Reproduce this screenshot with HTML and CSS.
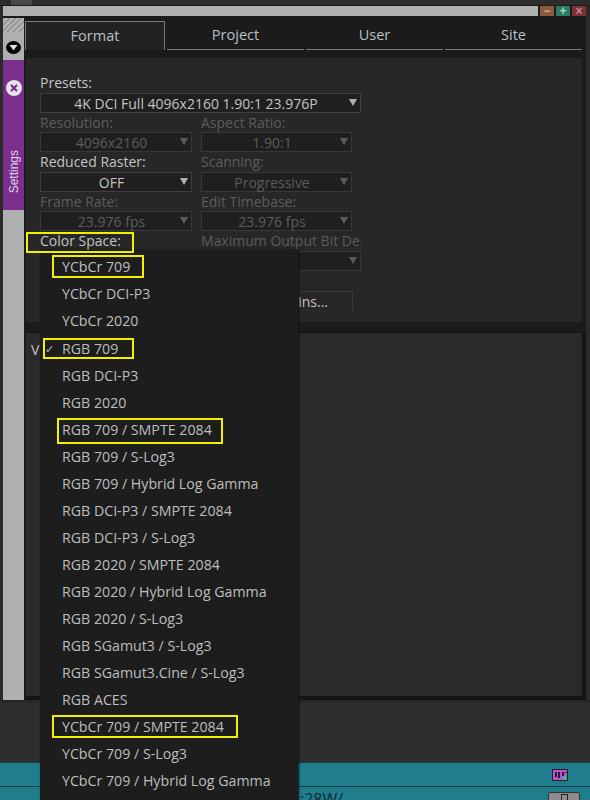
FILE: index.html
```html
<!DOCTYPE html>
<html lang="en">
<head>
    <meta charset="UTF-8">
    <title>Project Settings</title>
    <link rel="stylesheet" href="styles.css">
</head>
<body>
<div class="screen">
    <div class="top-strip"><span class="strip-tab"></span></div>
    <div class="titlebar">
        <div class="title-fill"></div>
        <button class="win-btn win-min">&minus;</button>
        <button class="win-btn win-max">+</button>
        <button class="win-btn win-close">&times;</button>
    </div>

    <div class="body">
        <aside class="sidebar">
            <div class="hatch"></div>
            <div class="side-grey">
                <svg width="15" height="13" viewBox="0 0 15 13"><ellipse cx="7.5" cy="6.5" rx="7.5" ry="6.5" fill="#000"/><path d="M3.5 4h8L7.5 9.5z" fill="#ddd"/></svg>
            </div>
            <div class="side-tab">
                <svg width="16" height="16" viewBox="0 0 16 16"><circle cx="8" cy="8" r="8" fill="#e8e0ea"/><path d="M5 5l6 6M11 5l-6 6" stroke="#7b2f8c" stroke-width="2.2"/></svg>
                <span class="side-label">Settings</span>
            </div>
            <div class="side-rest"></div>
        </aside>

        <main class="main">
            <nav class="tabs">
                <div class="tab active">Format</div>
                <div class="tab">Project</div>
                <div class="tab">User</div>
                <div class="tab">Site</div>
            </nav>

            <section class="panel">
                <div class="field wide">
                    <label>Presets:</label>
                    <div class="select wide-select">4K DCI Full 4096x2160 1.90:1 23.976P</div>
                </div>
                <div class="field off">
                    <label>Resolution:</label>
                    <div class="select">4096x2160</div>
                </div>
                <div class="field off">
                    <label>Aspect Ratio:</label>
                    <div class="select">1.90:1</div>
                </div>
                <div class="field">
                    <label>Reduced Raster:</label>
                    <div class="select">OFF</div>
                </div>
                <div class="field off">
                    <label>Scanning:</label>
                    <div class="select">Progressive</div>
                </div>
                <div class="field off">
                    <label>Frame Rate:</label>
                    <div class="select">23.976 fps</div>
                </div>
                <div class="field off">
                    <label>Edit Timebase:</label>
                    <div class="select">23.976 fps</div>
                </div>
                <div class="field">
                    <label>Color Space:</label>
                    <div class="select"></div>
                </div>
                <div class="field off">
                    <label class="clip">Maximum Output Bit Depth:</label>
                    <div class="select full">10</div>
                </div>
                <div class="plugin-btn">Project Plugins...</div>
            </section>

            <section class="panel-lower">V</section>
        </main>
    </div>

    <div class="footer"></div>
    <div class="track track-one">
        <svg class="track-icon" width="16" height="12" viewBox="0 0 16 12"><rect x=".5" y=".5" width="15" height="11" fill="#c050d8" stroke="#222"/><path d="M4 3v5M7 3v6M11 3v4M14 3v1" stroke="#222" stroke-width="2"/><rect x="11" y="7.5" width="3.5" height="3.5" fill="#1fd080"/></svg>
    </div>
    <div class="track track-two">
        <span class="track-name">:28W/</span>
        <span class="track-btn"></span>
    </div>

    <ul class="menu">
        <li><span class="mark mark-first">YCbCr 709</span></li>
        <li>YCbCr DCI-P3</li>
        <li>YCbCr 2020</li>
        <li class="checked"><span class="mark mark-rgb">RGB 709</span></li>
        <li>RGB DCI-P3</li>
        <li>RGB 2020</li>
        <li><span class="mark mark-pq">RGB 709 / SMPTE 2084</span></li>
        <li>RGB 709 / S-Log3</li>
        <li>RGB 709 / Hybrid Log Gamma</li>
        <li>RGB DCI-P3 / SMPTE 2084</li>
        <li>RGB DCI-P3 / S-Log3</li>
        <li>RGB 2020 / SMPTE 2084</li>
        <li>RGB 2020 / Hybrid Log Gamma</li>
        <li>RGB 2020 / S-Log3</li>
        <li>RGB SGamut3 / S-Log3</li>
        <li>RGB SGamut3.Cine / S-Log3</li>
        <li>RGB ACES</li>
        <li><span class="mark mark-first">YCbCr 709 / SMPTE 2084</span></li>
        <li>YCbCr 709 / S-Log3</li>
        <li>YCbCr 709 / Hybrid Log Gamma</li>
    </ul>
    <div class="space-mark"></div>
</div>
</body>
</html>
```

FILE: styles.css
```css
/* dark editor theme */
:root {
    --bg: #2b2b2b;
    --panel: #272727;
    --text: #c4c4c4;
    --dim: #5c5c5c;
    --mark: #f4f000;
}
* { box-sizing: border-box; }
body {
    margin: 0;
    background: var(--bg);
    font-family: "Open Sans", "Noto Sans", sans-serif;
    font-size: 14px;
    color: var(--text);
}
.screen {
    position: relative;
    width: 590px;
    height: 800px;
    overflow: hidden;
    display: flex;
    flex-direction: column;
}

/* top of the window */
.top-strip { height: 6px; background: #2c2c2c; border-bottom: 1px solid #1a1a1a; padding-left: 11px; }
.strip-tab { display: block; width: 21px; height: 5px; background: #4a4a4a; }
.titlebar { height: 12px; display: flex; margin: 0 4px 0 3px; background: #1a1a1a; }
.title-fill { flex: 1; height: 10px; margin-right: 2px; background: #b0b0b0; }
.win-btn {
    flex: none;
    width: 14px;
    height: 10px;
    margin-right: 2px;
    padding: 0;
    border: 0;
    font: 700 12px/10px "Liberation Sans", sans-serif;
}
.win-min { background: #8a5a3c; color: #d8a888; }
.win-max { background: #2f7a62; color: #9fe0c4; }
.win-close { background: #7c3238; color: #c88a8e; margin-right: 0; }

.body { height: 682px; display: flex; margin: 0 4px 0 3px; background: #1a1a1a; }

/* purple settings strip */
.sidebar { flex: none; width: 21px; display: flex; flex-direction: column; margin-right: 1px; }
.hatch {
    height: 14px;
    background: repeating-linear-gradient(135deg, #999 0 2px, #b6b6b6 2px 4px);
}
.side-grey {
    height: 28px;
    background: #b0b0b0;
    padding: 7px 0 0 3px;
}
.side-tab {
    height: 150px;
    background: #7b2f8c;
    display: flex;
    flex-direction: column;
    align-items: center;
    justify-content: space-between;
    padding: 20px 0 17px;
}
.side-label {
    writing-mode: vertical-rl;
    transform: rotate(180deg);
    font: 12px "Liberation Sans", sans-serif;
    color: #e2d2e6;
}
.side-rest { flex: 1; background: #b0b0b0; }

.main { flex: 1; min-width: 0; display: flex; flex-direction: column; background: #1b1b1b; }

/* tabs */
.tabs { display: flex; height: 40px; padding: 3px 4px 0 0; background: #1b1b1b; }
.tab {
    flex: 1;
    height: 29px;
    margin-left: 2px;
    border-bottom: 1px solid #7a7a7a;
    text-align: center;
    font-size: 14.5px;
    line-height: 28px;
    color: #b9c0c6;
}
.tab.active {
    flex: none;
    width: 140px;
    margin-left: 0;
    background: #222;
    border: 1px solid #7a7a7a;
    border-bottom: 0;
}

/* format panel */
.panel {
    height: 264px;
    margin: 0 4px 0 1px;
    padding: 15px 0 0 14px;
    background: var(--panel);
    display: grid;
    grid-template-columns: 151px 160px;
    grid-auto-rows: 39.6px;
    column-gap: 10px;
    align-content: start;
    position: relative;
}
.field label { display: block; height: 19.6px; line-height: 20px; white-space: nowrap; }
.field.wide { grid-column: 1 / 3; }
.field.off { color: var(--dim); }
.clip { width: 160px; overflow: hidden; }
.select {
    position: relative;
    width: 151px;
    height: 20px;
    line-height: 19px;
    padding-right: 9px;
    text-align: center;
    border: 1px solid #3f3f3f;
    background: #1f1f1f;
    color: var(--text);
}
.field:nth-child(even) .select { width: 152px; }
.field.off .select { color: var(--dim); border-color: #383838; }
.select.wide-select { width: 321px; }
.field .select.full { width: 160px; }
.select::after {
    content: "";
    position: absolute;
    right: 3px;
    top: 5px;
    border-left: 4px solid transparent;
    border-right: 4px solid transparent;
    border-top: 7px solid #b0b0b0;
}
.off .select::after { border-top-color: #5a5a5a; }
.plugin-btn {
    grid-column: 2;
    width: 152px;
    height: 19px;
    margin-top: 20px;
    padding-right: 24px;
    text-align: right;
    line-height: 19px;
    border: 1px solid #3a3a3a;
    border-bottom: 0;
    background: #262626;
}

.panel-lower {
    height: 368px;
    margin: 10px 0 0 1px;
    padding: 7px 5px;
    background: #2a2a2a;
    border: 1px solid #141414;
    border-width: 1px 4px 4px 0;
}

/* bottom of the window */
.footer { height: 62px; background: #2e2e2e; border-top: 3px solid #262626; }
.track { background: #1f7d8c; border-top: 1px solid #123f48; display: flex; justify-content: flex-end; }
.track-one { height: 25px; align-items: center; padding-right: 22px; border-bottom: 1px solid #123f48; }
.track-two { height: 13px; position: relative; border-top: 0; }
.track-name { position: absolute; left: 300px; top: 4px; color: #0d2c33; font-size: 16px; line-height: 16px; }
.track-btn {
    position: absolute;
    left: 548px;
    top: 5px;
    width: 32px;
    height: 10px;
    background: #8c8c8c;
    border: 1px solid #333;
    border-radius: 2px;
}
.track-btn::after {
    content: "";
    position: absolute;
    left: 12px;
    top: 1px;
    width: 5px;
    height: 7px;
    border: 1px solid #222;
}

/* colour space dropdown */
.menu {
    position: absolute;
    left: 40px;
    top: 250px;
    width: 258px;
    height: 560px;
    margin: 0;
    padding: 3.4px 0 0;
    list-style: none;
    background: #1d1d1d;
    box-shadow: 1px 0 2px #111;
    font-size: 14.2px;
}
.menu li {
    position: relative;
    height: 27.05px;
    padding-left: 22px;
    line-height: 27px;
    white-space: nowrap;
    color: #bdbdbd;
}
.menu .checked::before {
    content: "\2713";
    position: absolute;
    left: 5px;
    font-size: 11px;
}
.mark { position: relative; }
.mark::after {
    content: "";
    position: absolute;
    border: 2px solid var(--mark);
    left: -10px;
    right: -14px;
    top: -2px;
    bottom: -2px;
}
.mark-rgb::after { left: -19px; right: -16px; top: -1px; bottom: -1px; }
.mark-pq::after { left: -5px; right: -11px; top: -2px; bottom: -5px; }
.space-mark {
    position: absolute;
    left: 26px;
    top: 232px;
    width: 108px;
    height: 21px;
    border: 2px solid var(--mark);
}
```
